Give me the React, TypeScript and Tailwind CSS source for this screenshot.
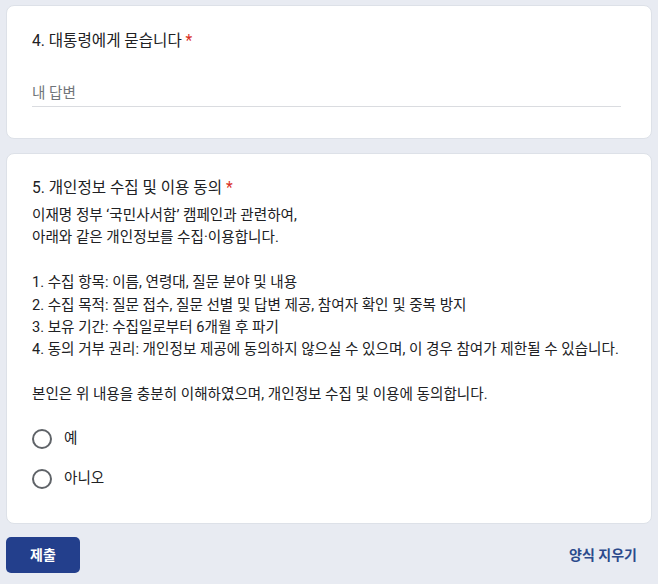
import React from "react";

const font = { fontFamily: "Roboto, 'Noto Sans CJK KR', sans-serif" };

function Radio({ label }: { label: string }) {
  return (
    <div className="flex items-center h-[40px]">
      <div className="w-[20px] h-[20px] rounded-full border-2 border-[#5f6368]" />
      <span className="ml-[12px] text-[14.6px] text-[#202124]">{label}</span>
    </div>
  );
}

export default function App() {
  return (
    <div className="min-h-[584px] bg-[#e8ebf2] px-[6px] pt-[5px] pb-[12px] text-[#202124]" style={font}>
      <div className="bg-white rounded-lg border border-[#dde1e8] h-[134px] pl-[25px] pr-[25px] pt-[23px]">
        <div className="text-[15.6px] leading-[24px]">
          4. 대통령에게 묻습니다 <span className="text-[#d93025]">*</span>
        </div>
        <div className="mt-[14px] w-[589px] border-b border-[#dadce0] h-[40px] flex items-end pb-[2px] text-[14.6px] leading-[22px] text-[#70757a]">
          내 답변
        </div>
      </div>

      <div className="mt-[14px] bg-white rounded-lg border border-[#dde1e8] h-[371px] pl-[25px] pr-[10px] pt-[22px]">
        <div className="text-[15.6px] leading-[24px]">
          5. 개인정보 수집 및 이용 동의 <span className="text-[#d93025]">*</span>
        </div>
        <div className="mt-[4px] text-[14.6px] leading-[22.4px]">
          <div>이재명 정부 ‘국민사서함’ 캠페인과 관련하여,</div>
          <div>아래와 같은 개인정보를 수집·이용합니다.</div>
          <div className="h-[22.4px]" />
          <div>1. 수집 항목: 이름, 연령대, 질문 분야 및 내용</div>
          <div>2. 수집 목적: 질문 접수, 질문 선별 및 답변 제공, 참여자 확인 및 중복 방지</div>
          <div>3. 보유 기간: 수집일로부터 6개월 후 파기</div>
          <div className="whitespace-nowrap">4. 동의 거부 권리: 개인정보 제공에 동의하지 않으실 수 있으며, 이 경우 참여가 제한될 수 있습니다.</div>
          <div className="h-[22.4px]" />
          <div>본인은 위 내용을 충분히 이해하였으며, 개인정보 수집 및 이용에 동의합니다.</div>
        </div>
        <div className="mt-[13px] flex flex-col">
          <Radio label="예" />
          <Radio label="아니오" />
        </div>
      </div>

      <div className="mt-[13px] flex items-center justify-between">
        <button className="w-[74px] h-[36px] rounded-[5px] bg-[#233f8c] text-white text-[14px] font-bold">
          제출
        </button>
        <span className="mr-[15px] text-[14px] font-bold text-[#2b4a8c]">양식 지우기</span>
      </div>
    </div>
  );
}
